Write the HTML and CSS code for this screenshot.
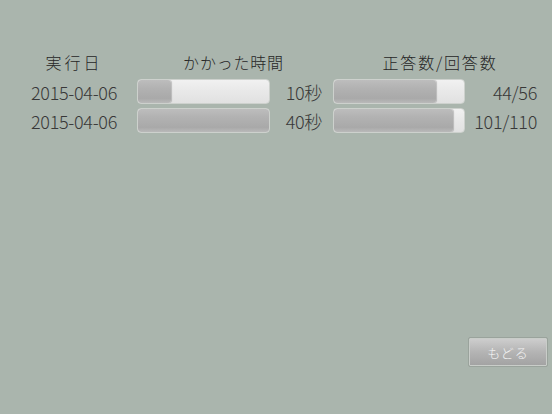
FILE: index.html
```html
<!DOCTYPE html>
<html lang="ja">
<head>
<meta charset="utf-8">
<link rel="stylesheet" href="styles.css">
</head>
<body>
<div class="screen">
  <div class="head">
    <div class="h h-date">実行日</div>
    <div class="h h-time">かかった時間</div>
    <div class="h h-ans">正答数/回答数</div>
  </div>
  <div class="rows">
    <div class="row">
      <div class="date">2015-04-06</div>
      <div class="bar bar-time"><div class="fill" style="width:25%"></div></div>
      <div class="val val-time">10秒</div>
      <div class="bar bar-ans"><div class="fill" style="width:78.6%"></div></div>
      <div class="val val-ans">44/56</div>
    </div>
    <div class="row">
      <div class="date">2015-04-06</div>
      <div class="bar bar-time"><div class="fill" style="width:100%"></div></div>
      <div class="val val-time">40秒</div>
      <div class="bar bar-ans"><div class="fill" style="width:91.8%"></div></div>
      <div class="val val-ans">101/110</div>
    </div>
  </div>
  <button class="back">もどる</button>
</div>
</body>
</html>
```
FILE: styles.css
```css
html, body {
  margin: 0;
  padding: 0;
  background: #aab5ad;
}
.screen {
  width: 552px;
  height: 414px;
  box-sizing: border-box;
  padding-top: 52px;
  display: flex;
  flex-direction: column;
  font-family: "Noto Sans CJK JP", "Noto Sans", sans-serif;
  color: #383838;
  overflow: hidden;
}
.head {
  display: flex;
  height: 20px;
  line-height: 20px;
  font-size: 16px;
  font-weight: 300;
  color: #262626;
}
.h { text-align: center; }
.h-date { width: 145px; letter-spacing: 3px; padding-left: 3px; box-sizing: border-box; }
.h-time { width: 177px; letter-spacing: 0.8px; }
.h-ans { width: 220px; margin-left: 8px; letter-spacing: 1.8px; }
.rows {
  margin-top: 7px;
  display: flex;
  flex-direction: column;
  gap: 4px;
}
.row {
  display: flex;
  align-items: center;
  height: 25px;
  font-size: 18px;
  font-weight: 300;
  letter-spacing: -0.3px;
}
.date {
  width: 117px;
  text-align: right;
  margin-right: 20px;
}
.bar {
  height: 25px;
  box-sizing: border-box;
  border: 1px solid #cdd1cd;
  border-radius: 4px;
  background: linear-gradient(#f1f1f1, #e8e8e8 50%, #e1e1e1);
  overflow: hidden;
  display: flex;
}
.bar-time { width: 133px; }
.bar-ans { width: 132px; }
.fill {
  height: 100%;
  border-radius: 3px;
  background: linear-gradient(#bdbdbd, #b2b2b2 35%, #a9a9a9 80%, #b9b9b9);
  box-shadow: 1px 0 1px rgba(0,0,0,0.2);
}
.val { text-align: right; }
.val-time { width: 52px; margin-right: 11px; }
.val-ans { width: 72px; }
.back {
  margin-top: auto;
  margin-bottom: 48px;
  margin-right: 5px;
  align-self: flex-end;
  width: 78px;
  height: 28px;
  padding: 0;
  border: 1px solid #c9cdc9;
  outline: 1px solid #9aa39c;
  border-radius: 1px;
  background: linear-gradient(#cdcdcd, #b4b4b4 50%, #a3a3a3);
  color: #f4f4f4;
  font-family: "Noto Sans CJK JP", sans-serif;
  font-size: 13px;
  font-weight: 300;
  letter-spacing: 1px;
}
```
